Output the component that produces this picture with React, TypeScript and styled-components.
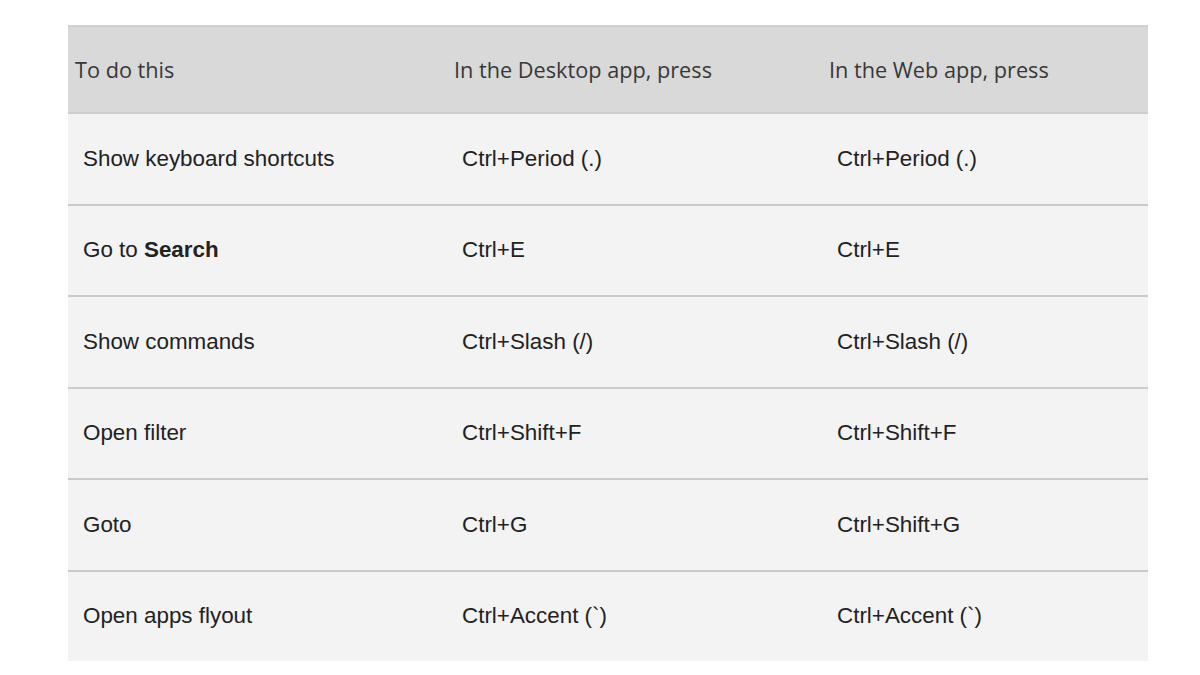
import React from 'react';
import styled, { createGlobalStyle } from 'styled-components';

const GlobalStyle = createGlobalStyle`
  html, body {
    margin: 0;
    padding: 0;
    background: #ffffff;
  }
`;

const Page = styled.div`
  width: 1200px;
  height: 675px;
  padding: 25px 52px 0 68px;
  box-sizing: border-box;
`;

const Table = styled.div`
  width: 1080px;
  display: grid;
  grid-template-columns: 379px 375px 326px;
  border-top: 2px solid #cfcfcf;
`;

const HeadCell = styled.div`
  height: 85px;
  display: flex;
  align-items: center;
  padding-left: 7px;
  background: #d9d9d9;
  border-bottom: 2px solid #cdcdcd;
  font-family: 'Open Sans', 'DejaVu Sans', sans-serif;
  font-size: 21.7px;
  color: #383838;
`;

const Cell = styled.div<{ $last?: boolean }>`
  height: ${p => (p.$last ? 89 : 89.5)}px;
  display: flex;
  align-items: center;
  padding-left: 15px;
  background: #f3f3f3;
  border-bottom: ${p => (p.$last ? 'none' : '2px solid #cbcbcb')};
  font-family: 'Liberation Sans', Arial, sans-serif;
  font-size: 22.4px;
  color: #222222;
  white-space: pre;
`;

const rows: [React.ReactNode, string, string][] = [
  ['Show keyboard shortcuts', 'Ctrl+Period (.)', 'Ctrl+Period (.)'],
  [<>Go to <b>Search</b></>, 'Ctrl+E', 'Ctrl+E'],
  ['Show commands', 'Ctrl+Slash (/)', 'Ctrl+Slash (/)'],
  ['Open filter', 'Ctrl+Shift+F', 'Ctrl+Shift+F'],
  ['Goto', 'Ctrl+G', 'Ctrl+Shift+G'],
  ['Open apps flyout', 'Ctrl+Accent (`)', 'Ctrl+Accent (`)'],
];

export default function App() {
  return (
    <>
      <GlobalStyle />
      <Page>
        <Table>
          <HeadCell>To do this</HeadCell>
          <HeadCell>In the Desktop app, press</HeadCell>
          <HeadCell>In the Web app, press</HeadCell>
          {rows.map((r, i) => {
            const last = i === rows.length - 1;
            return (
              <React.Fragment key={i}>
                <Cell $last={last}>{r[0]}</Cell>
                <Cell $last={last}>{r[1]}</Cell>
                <Cell $last={last}>{r[2]}</Cell>
              </React.Fragment>
            );
          })}
        </Table>
      </Page>
    </>
  );
}
